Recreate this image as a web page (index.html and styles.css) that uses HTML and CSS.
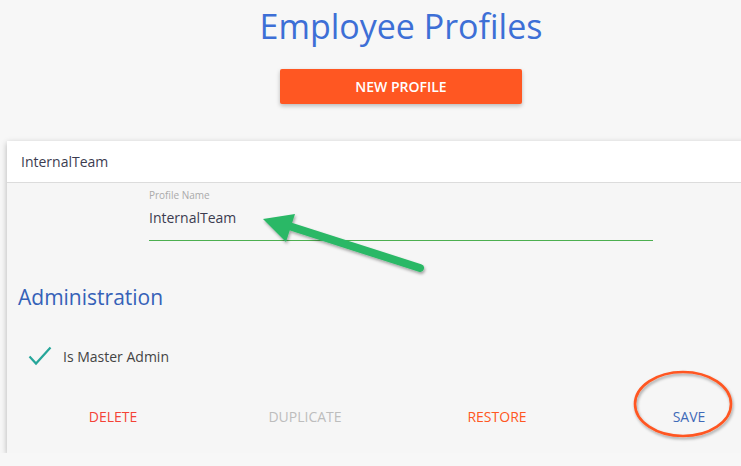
FILE: index.html
```html
<!DOCTYPE html>
<html lang="en">
<head>
    <meta charset="UTF-8">
    <meta name="viewport" content="width=device-width, initial-scale=1.0">
    <title>Employee Profiles</title>
    <link rel="stylesheet" href="styles.css">
</head>
<body>
    <div class="page">
        <h1 class="title">Employee Profiles</h1>
        <div class="newRow">
            <button class="newBtn">NEW PROFILE</button>
        </div>

        <div class="card">
            <div class="cardHeader">InternalTeam</div>
            <div class="cardBody">
                <div class="field">
                    <label class="fieldLabel">Profile Name</label>
                    <div class="fieldValue">InternalTeam</div>
                </div>

                <h2 class="section">Administration</h2>

                <div class="checkRow">
                    <svg class="check" width="24" height="20" viewBox="0 0 24 20">
                        <path d="M1.5 10.5 L8 17.5 L22.5 1.5" fill="none" stroke="#26a69a" stroke-width="2.2"/>
                    </svg>
                    <span>Is Master Admin</span>
                </div>

                <div class="actions">
                    <button class="act del">DELETE</button>
                    <button class="act dup">DUPLICATE</button>
                    <button class="act res">RESTORE</button>
                    <button class="act save">SAVE</button>
                </div>
            </div>
        </div>

        <!-- annotations drawn over the screenshot -->
        <svg class="arrow" width="200" height="80" viewBox="0 0 200 80">
            <defs>
                <filter id="sh" x="-20%" y="-20%" width="140%" height="160%">
                    <feDropShadow dx="1" dy="2" stdDeviation="1.5" flood-color="#000" flood-opacity="0.35"/>
                </filter>
            </defs>
            <g filter="url(#sh)">
                <line x1="166" y1="68" x2="35" y2="26" stroke="#2bb866" stroke-width="8" stroke-linecap="round"/>
                <polygon points="9,19 41,14 32,42" fill="#2bb866"/>
            </g>
        </svg>
        <svg class="ring" width="110" height="80" viewBox="0 0 110 80">
            <defs>
                <filter id="sh2" x="-20%" y="-20%" width="140%" height="150%">
                    <feDropShadow dx="1" dy="2" stdDeviation="1.5" flood-color="#000" flood-opacity="0.35"/>
                </filter>
            </defs>
            <ellipse cx="53" cy="38" rx="48" ry="32" fill="none" stroke="#ff5722" stroke-width="2.6" filter="url(#sh2)"/>
        </svg>
    </div>
</body>
</html>
```

FILE: styles.css
```css
html, body {
    margin: 0;
    background-color: #f7f7f7;
    overflow: hidden;
}
body {
    font-family: "Open Sans", "Liberation Sans", sans-serif;
    color: #444;
}
.page {
    position: relative;
    width: 788px;
    margin-left: 7px;
}
.title {
    margin: 0;
    padding-top: 3px;
    text-align: center;
    font-size: 34px;
    font-weight: 400;
    color: #3d6fd6;
    line-height: 46px;
}
.newRow {
    display: flex;
    justify-content: center;
    margin-top: 20px;
}
.newBtn {
    width: 242px;
    height: 35px;
    border: none;
    border-radius: 2px;
    background-color: #ff5722;
    color: #fff;
    font-family: inherit;
    font-size: 14px;
    font-weight: 600;
    box-shadow: rgba(0, 0, 0, 0.25) 0px 2px 4px;
}
.card {
    margin-top: 37px;
    background-color: #f6f6f6;
    box-shadow: rgba(0, 0, 0, 0.28) 0px 2px 6px;
}
.cardHeader {
    height: 41px;
    padding-left: 14px;
    display: flex;
    align-items: center;
    background-color: #fff;
    border-bottom: 1px solid #dcdcdc;
    font-size: 14px;
    color: #3c3c50;
}
.cardBody {
    padding: 5px 10px 13px 10px;
}
.field {
    margin-left: 132px;
    width: 504px;
    border-bottom: 1px solid #4caf50;
}
.fieldLabel {
    display: block;
    font-size: 10px;
    color: #aaa;
    line-height: 14px;
}
.fieldValue {
    font-size: 14px;
    color: #3c3c50;
    line-height: 20px;
    padding: 6px 0 12px 0;
}
.section {
    margin: 36px 0 0 1px;
    font-size: 21px;
    font-weight: 400;
    color: #3561b8;
    line-height: 40px;
}
.checkRow {
    display: flex;
    align-items: center;
    gap: 11px;
    margin-top: 29px;
    padding-left: 11px;
    font-size: 14px;
    color: #444;
}
.actions {
    display: grid;
    grid-template-columns: repeat(4, 1fr);
    margin-top: 26px;
    height: 48px;
}
.act {
    border: none;
    background: none;
    font-family: inherit;
    font-size: 14px;
    padding: 0;
    align-self: center;
}
.del { color: #f44336; }
.dup { color: #bdbdbd; }
.res { color: #ff5722; }
.save { color: #3f6ab8; }
.arrow {
    position: absolute;
    left: 247px;
    top: 200px;
}
.ring {
    position: absolute;
    left: 623px;
    top: 366px;
}
```
